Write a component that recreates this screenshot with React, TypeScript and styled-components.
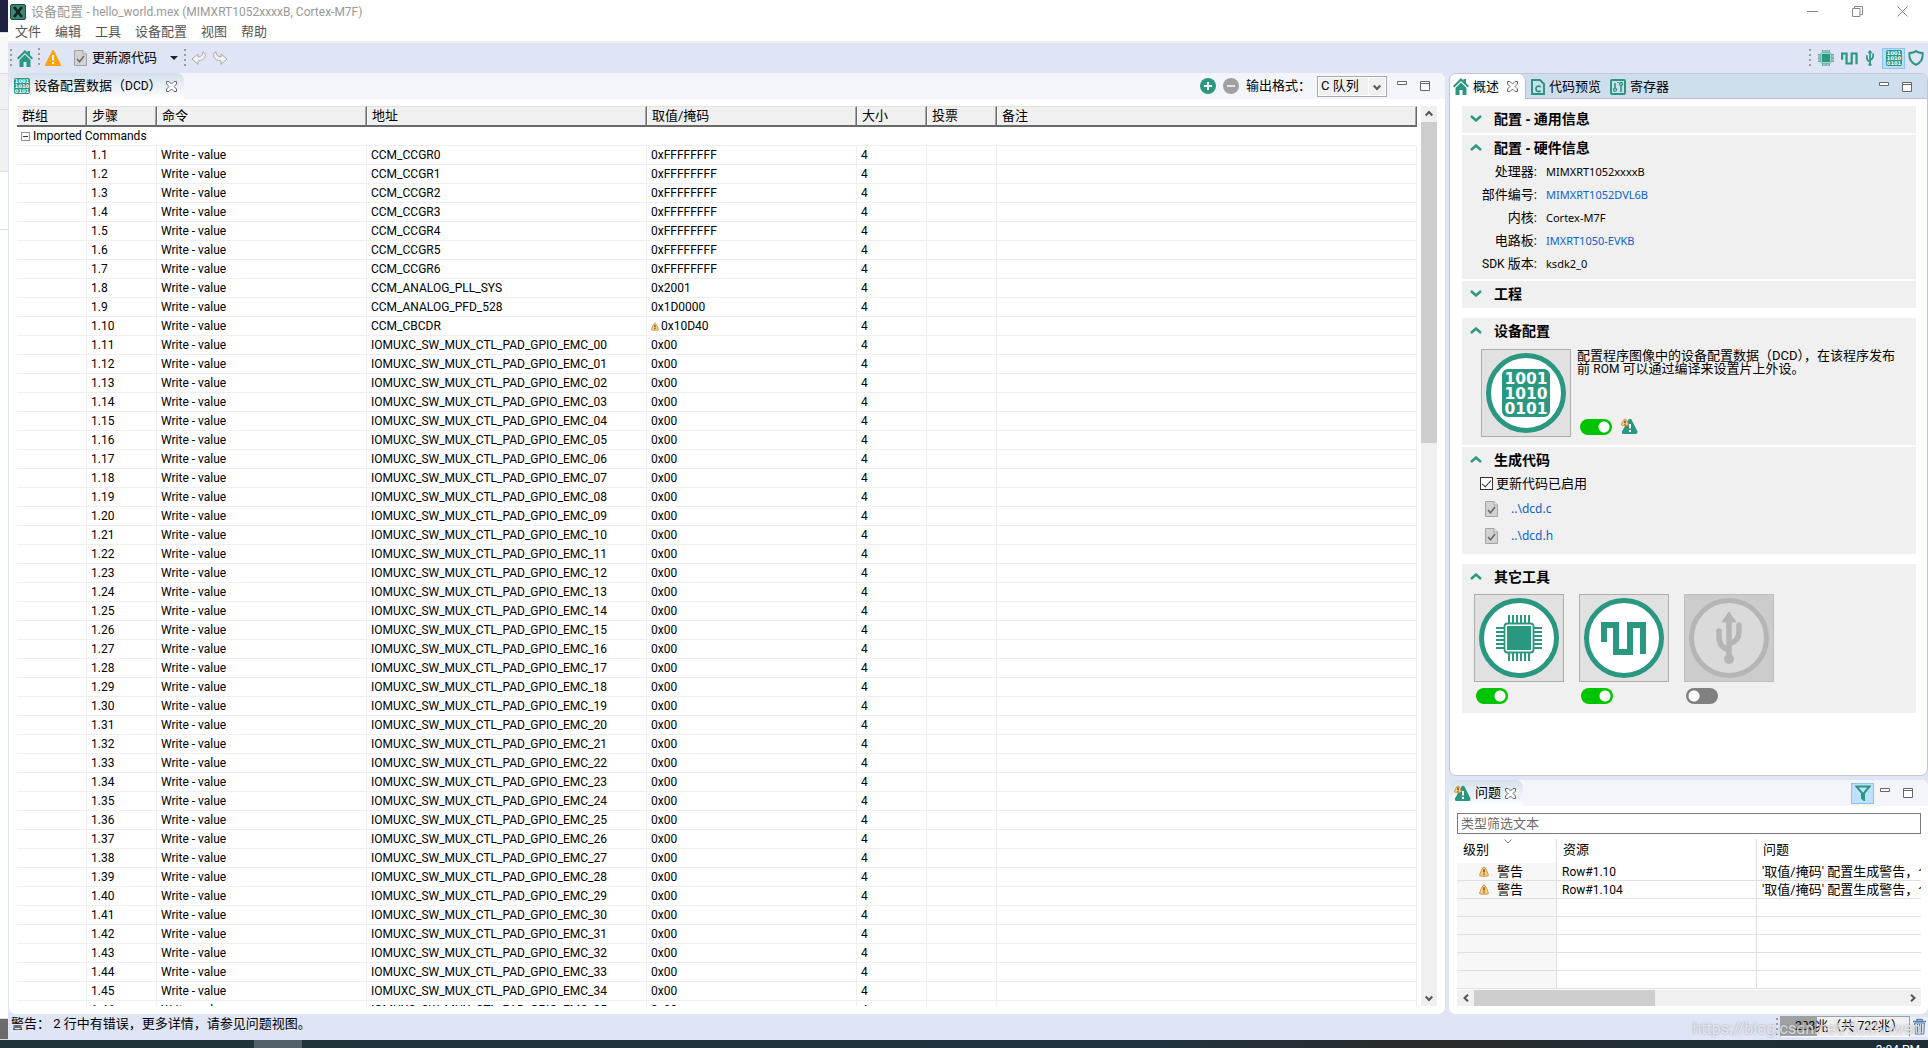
import React, { useState } from 'react';
import styled, { createGlobalStyle, css } from 'styled-components';

const GREEN = '#2a9780';
const FRAME = '#dfe5f5';
const CJK = '"Noto Sans CJK SC", sans-serif';

const Global = createGlobalStyle`
  * { box-sizing: border-box; }
  body { margin: 0; background: #fff; color: #000; font: 13px/16px Roboto, ${CJK}; overflow: hidden; }
  button, input, select { font: inherit; color: inherit; }
  button { border: 0; padding: 0; margin: 0; background: none; display: flex; align-items: center; }
  a { color: #0b62d0; text-decoration: none; }
  svg { display: block; flex: none; }
`;

/* ---------- frame ---------- */
const Desktop = styled.div`
  height: 100vh;
  display: flex;
  flex-direction: column;
  position: relative;
`;
const DesktopRow = styled.div`
  flex: 1;
  min-height: 0;
  display: flex;
`;
const BehindStrip = styled.div`
  width: 8px;
  flex: none;
  display: flex;
  flex-direction: column;
`;
const StripBlock = styled.div<{ $h?: number; $color: string }>`
  ${p => (p.$h ? css`height: ${p.$h}px;` : css`flex: 1;`)}
  background: ${p => p.$color};
  border-bottom: 1px solid #dcdcdc;
`;
const Window = styled.div`
  flex: 1;
  min-width: 0;
  display: flex;
  flex-direction: column;
  background: ${FRAME};
`;
const TitleBar = styled.header`
  height: 23px;
  background: #fff;
  display: flex;
  align-items: center;
  padding: 0 20px 0 2px;
  gap: 5px;
  color: #999;
`;
const TitleText = styled.h1`
  flex: 1;
  margin: 0;
  font-size: 13px;
  font-weight: 400;
`;
const Latin = styled.span`
  font-size: 12px;
`;
const WindowButtons = styled.div`
  display: flex;
  gap: 34px;
  color: #888;
`;
const MenuBar = styled.nav`
  height: 20px;
  background: #fff;
  border-bottom: 2px solid #f0f0f0;
  display: flex;
  align-items: center;
  gap: 14px;
  padding-left: 7px;
  color: #555;
`;
const ToolBar = styled.div`
  height: 30px;
  display: flex;
  align-items: center;
  justify-content: space-between;
  padding: 0 4px 0 2px;
`;
const Tools = styled.div<{ $gap: number }>`
  display: flex;
  align-items: center;
  gap: ${p => p.$gap}px;
`;
const Grip = styled.span<{ $h?: number }>`
  width: 2px;
  height: ${p => p.$h || 18}px;
  background: repeating-linear-gradient(#a09c94 0 2px, transparent 2px 5px);
`;
const UpdateButton = styled.button`
  gap: 5px;
  margin-left: 8px;
`;
const Caret = styled.i`
  border: 4px solid transparent;
  border-top-color: #222;
  border-bottom: 0;
  margin: 0 1px 0 8px;
`;
const PickedButton = styled.button`
  width: 23px;
  height: 21px;
  justify-content: center;
  background: #b9dcfa;
  border: 1px solid #8ac4f7;
  margin-right: -4px;
`;
const Workspace = styled.main`
  flex: 1;
  min-height: 0;
  display: grid;
  grid-template-columns: minmax(0, 1fr) 479px;
  gap: 4px;
  padding-left: 1px;
`;
const SideColumn = styled.div`
  min-height: 0;
  display: grid;
  grid-template-rows: minmax(0, 1fr) 234px;
  gap: 4px;
`;
const Panel = styled.section<{ $outlined?: boolean }>`
  min-height: 0;
  min-width: 0;
  background: #fff;
  border-radius: 7px;
  overflow: hidden;
  display: flex;
  flex-direction: column;
  ${p => p.$outlined && css`border: 1px solid #c3c7d2;`}
`;
const TabBar = styled.div<{ $active?: boolean }>`
  height: 26px;
  flex: none;
  display: flex;
  align-items: stretch;
  justify-content: space-between;
  background: ${p => (p.$active ? '#cfdeed' : '#f4f5fb')};
  ${p => p.$active && css`box-shadow: inset 0 -1px #b4bfd3; height: 25px;`}
  padding-right: 15px;
`;
const TabGroup = styled.div`
  display: flex;
`;
const Tab = styled.button<{ $look: 'soft' | 'open' | 'flat' }>`
  gap: 4px;
  padding: 0 7px 0 5px;
  ${p => p.$look === 'soft' && css`
    background: linear-gradient(#d3e0ec, #fff);
    border-radius: 0 7px 0 0;
  `}
  ${p => p.$look === 'open' && css`
    background: #fff;
    border-right: 1px solid #b4bfd3;
    border-radius: 0 7px 0 0;
    padding-left: 3px;
  `}
  ${p => p.$look === 'flat' && css`
    padding-right: 4px;
  `}
`;
const CloseSlot = styled.span<{ $tight?: boolean }>`
  margin-left: ${p => (p.$tight ? 0 : 4)}px;
`;

/* ---------- command table ---------- */
const FormatLabel = styled.label`
  display: flex;
  align-items: center;
  gap: 6px;
  margin-right: 3px;
`;
const SelectBox = styled.span`
  position: relative;
  display: flex;
`;
const FormatSelect = styled.select`
  appearance: none;
  width: 70px;
  height: 21px;
  border: 1px solid #a8a8a8;
  border-radius: 0;
  background: linear-gradient(90deg, #f0f0f0 50px, #fff 50px 51px, #f0f0f0 51px);
  box-shadow: inset 0 0 0 1px #fff;
  padding: 0 0 1px 3px;
  line-height: 16px;
`;
const SelectArrow = styled.span`
  position: absolute;
  right: 6px;
  top: 8px;
  pointer-events: none;
`;
const TableArea = styled.div`
  flex: 1;
  min-height: 0;
  display: flex;
  margin: 7px 8px 8px;
  gap: 4px;
`;
const TableClip = styled.div`
  flex: 1;
  min-width: 0;
  overflow: hidden;
`;
const CommandTable = styled.table`
  width: 100%;
  table-layout: fixed;
  border-collapse: separate;
  border-spacing: 0;
  font-size: 12px;
  th {
    height: 21px;
    padding: 0 0 0 5px;
    text-align: left;
    font-size: 13px;
    line-height: 16px;
    font-weight: 400;
    background: #f0f0f0;
    border-top: 1px solid #e2e2e2;
    border-right: 1px solid #696969;
    border-bottom: 2px solid #696969;
    box-shadow: inset -1px 0 #a8a8a8, inset 1px 0 #fff;
  }
  td {
    height: 19px;
    padding: 0 0 0 4px;
    border-right: 1px solid #efefef;
    border-bottom: 1px solid #efefef;
    white-space: nowrap;
    line-height: 16px;
  }
`;
const GroupCell = styled.td`
  border-right-color: transparent !important;
`;
const GroupLabel = styled.div`
  display: flex;
  align-items: center;
  gap: 3px;
`;
const Expander = styled.button`
  width: 9px;
  height: 9px;
  border: 1px solid #919191;
  background: linear-gradient(#333, #333) center / 5px 1px no-repeat #fff;
`;
const ValueCell = styled.div`
  display: flex;
  align-items: center;
  gap: 2px;
`;
const ScrollTrack = styled.div<{ $row?: boolean }>`
  flex: none;
  display: flex;
  flex-direction: ${p => (p.$row ? 'row' : 'column')};
  ${p => (p.$row ? css`height: 16px;` : css`width: 16px;`)}
  background: #f0f0f0;
`;
const ScrollEnd = styled.button`
  width: 17px;
  height: 16px;
  flex: none;
  justify-content: center;
  align-self: center;
`;
const ScrollLane = styled.div`
  flex: 1;
  min-height: 0;
`;
const ScrollThumb = styled.div<{ $row?: boolean }>`
  background: #cdcdcd;
  ${p => (p.$row ? css`width: 42%; height: 100%;` : css`height: 37%; width: 100%;`)}
`;

/* ---------- overview ---------- */
const Overview = styled.div`
  flex: 1;
  min-height: 0;
  padding: 7px 11px 0 12px;
`;
const Section = styled.section<{ $gap?: number }>`
  background: #f0f0f0;
  min-height: 27px;
  margin-bottom: ${p => p.$gap || 2}px;
`;
const SectionTitle = styled.h2`
  margin: 0;
  height: 25px;
  display: flex;
  align-items: center;
  gap: 12px;
  padding-left: 8px;
  font: 700 14px/20px "Noto Sans", ${CJK};
`;
const Facts = styled.dl`
  margin: 0;
  padding-bottom: 4px;
  display: grid;
  grid-template-columns: 75px 1fr;
  grid-auto-rows: 23px;
  align-items: center;
  column-gap: 9px;
  dt { text-align: right; }
  dt, dd { margin: 0; }
  dd { font: 11px/16px "Noto Sans", ${CJK}; }
`;
const DeviceRow = styled.div`
  display: flex;
  gap: 6px;
  padding: 6px 12px 8px 19px;
`;
const DeviceText = styled.div`
  flex: 1;
  display: flex;
  flex-direction: column;
  justify-content: space-between;
  p { margin: 0; line-height: 13px; }
`;
const Tile = styled.button<{ $off?: boolean }>`
  width: 90px;
  height: 88px;
  justify-content: center;
  border: 1px solid ${p => (p.$off ? '#bfbfbf' : '#adadad')};
  background: ${p => (p.$off ? '#cccccc' : '#e1e1e1')};
`;
const ToggleRow = styled.div`
  display: flex;
  align-items: center;
  gap: 9px;
  padding: 0 3px 2px;
`;
const Toggle = styled.input`
  appearance: none;
  width: 32px;
  height: 16px;
  margin: 0;
  border-radius: 8px;
  background: radial-gradient(circle at 8px 8px, #fff 5px, transparent 6px) #808080;
  &:checked {
    background: radial-gradient(circle at 24px 8px, #fff 5px, transparent 6px) #00c400;
  }
`;
const CheckLabel = styled.label`
  height: 23px;
  display: flex;
  align-items: center;
  gap: 3px;
  padding-left: 18px;
`;
const Check = styled.input`
  appearance: none;
  width: 13px;
  height: 13px;
  margin: 0;
  border: 1px solid #333;
  background: #fff;
  display: grid;
  place-items: center;
  &:checked::after {
    content: "";
    width: 8px;
    height: 4px;
    border: solid #333;
    border-width: 0 0 1px 1px;
    transform: translateY(-1px) rotate(-48deg);
  }
`;
const FileList = styled.ul`
  list-style: none;
  margin: 0;
  padding: 0 0 5px 23px;
  font: 12px/16px "Noto Sans", ${CJK};
  li { height: 27px; display: flex; align-items: center; gap: 13px; }
`;
const ToolTiles = styled.div`
  display: flex;
  gap: 15px;
  padding: 5px 12px 9px;
`;
const ToolTile = styled.div`
  display: flex;
  flex-direction: column;
  gap: 6px;
  input { margin-left: 2px; }
`;

/* ---------- problems ---------- */
const ProblemsBody = styled.div`
  flex: 1;
  min-height: 0;
  display: flex;
  flex-direction: column;
  padding: 7px 7px 8px 8px;
`;
const FilterInput = styled.input`
  height: 21px;
  flex: none;
  border: 1px solid #7a7a7a;
  padding: 0 3px 1px;
  margin-bottom: 5px;
  &::placeholder { color: #6b6b6b; opacity: 1; }
`;
const FilterButton = styled(PickedButton)`
  background: #bfe0fb;
`;
const ProblemClip = styled.div`
  flex: 1;
  min-height: 0;
  overflow: hidden;
  margin-bottom: 1px;
`;
const ProblemTable = styled.table`
  width: 100%;
  table-layout: fixed;
  border-collapse: separate;
  border-spacing: 0;
  th {
    height: 24px;
    padding: 0 0 2px 6px;
    text-align: left;
    font-weight: 400;
    border-right: 1px solid #e0e0e0;
    line-height: 16px;
    position: relative;
  }
  td {
    height: 18px;
    padding: 0 0 0 5px;
    border-right: 1px solid #e0e0e0;
    border-bottom: 1px solid #e0e0e0;
    white-space: nowrap;
    overflow: hidden;
    line-height: 16px;
  }
  td:first-child { background: #f7f7f7; }
  td:nth-child(2) { font: 12px/16px Roboto, ${CJK}; }
  th:last-child, td:last-child { border-right: 0; }
`;
const SortMark = styled.span`
  position: absolute;
  top: 0;
  left: 47px;
`;
const Level = styled.div`
  display: flex;
  align-items: center;
  gap: 8px;
  padding-left: 17px;
`;

/* ---------- bottom ---------- */
const StatusBar = styled.footer`
  height: 26px;
  flex: none;
  display: flex;
  justify-content: space-between;
  padding: 2px 0 0 3px;
`;
const StatusText = styled.span`
  line-height: 16px;
`;
const Memory = styled.div`
  display: flex;
  align-items: center;
  height: 21px;
  gap: 2px;
`;
const MemoryMeter = styled.div`
  width: 130px;
  height: 21px;
  border: 1px solid #a0a0a0;
  border-bottom-color: #fff;
  background: linear-gradient(90deg, #a0a0a0 28%, #f0f0f0 28%);
  line-height: 17px;
  padding-left: 14px;
  white-space: nowrap;
  overflow: hidden;
`;
const Trash = styled.button`
  width: 18px;
  height: 20px;
  justify-content: center;
  background: #eef0f5;
  margin-left: -2px;
`;
const Watermark = styled.span`
  position: absolute;
  right: 7px;
  bottom: 9px;
  font: 16px/20px Roboto, ${CJK};
  color: rgba(255, 255, 255, 0.7);
  text-shadow: 0 0 2px rgba(90, 90, 105, 0.6);
  pointer-events: none;
`;
const TaskBar = styled.div`
  height: 8px;
  flex: none;
  display: flex;
  justify-content: space-between;
  overflow: hidden;
  background: linear-gradient(90deg, #20333a, #22333f 60%, #2a2a2a 75%, #1f2d35 85%, #1e2c34);
  padding: 0 8px 0 254px;
`;
const TaskSlot = styled.div`
  width: 48px;
  background: #52616a;
`;
const Clock = styled.time`
  color: #fff;
  font: 12px/16px Roboto, ${CJK};
  padding-top: 2px;
`;

/* ---------- icons ---------- */
const Home = () => (
  <svg width="16" height="17" viewBox="0 0 16 17" fill={GREEN}>
    <path d="M8 0L0 8l1.3 1.4L8 3l6.700 6.400L16 8l-3-3V1h-2.500v1.600z" />
    <path d="M8 4.500L2.500 10v7H6.500v-5h3v5h4v-7z" />
  </svg>
);
const Warn = () => (
  <svg width="16" height="16" viewBox="0 0 16 16">
    <path d="M8 1L15 15H1z" fill="#fca311" stroke="#fca311" strokeWidth="2" strokeLinejoin="round" />
    <path d="M7 5h2v5.500H7zM7 12h2v2H7z" fill="#fff" />
  </svg>
);
const SmallWarn = ({ s = 10 }: { s?: number }) => (
  <svg width={s} height={s + 1} viewBox="0 0 10 11">
    <path d="M5 .7C6 .7 9.500 8 9.400 9.500 9.200 10.500 .8 10.500 .6 9.500 .5 8 4 .7 5 .7z" fill="#f6cf7d" stroke="#c98a34" strokeWidth=".9" />
    <path d="M4.400 3.200h1.200v3.400H4.400zM4.400 7.500h1.200v1.300H4.400z" fill="#4a3210" />
  </svg>
);
const AlertPair = () => (
  <svg width="17" height="17" viewBox="0 0 17 17">
    <path d="M7.500 1.500Q9 0 10.500 1.500L16.500 13.500Q16.500 16 15 16H2.500Q.5 16 1 13.500z" fill={GREEN} />
    <path d="M8 6h2v4.500H8zM8 12h2v2H8z" fill="#fff" />
    <path d="M4 .8C5 .8 7.500 5.500 7.400 6.800 7.200 7.900 .7 7.900 .5 6.800 .4 5.500 3 .8 4 .8z" fill="#f6cf7d" stroke="#c98a34" strokeWidth=".9" />
    <path d="M3.400 2.500h1.200v2.600H3.400zM3.400 5.800h1.200v1H3.400z" fill="#4a3210" />
  </svg>
);
const Doc = () => (
  <svg width="13" height="16" viewBox="0 0 13 16">
    <path d="M.5.5h8.500l3.500 3.500v11.500H.5z" fill="#d2d2d2" stroke="#a3a3a3" />
    <path d="M9 .5v3.500h3.500" fill="#eee" stroke="#a3a3a3" />
    <path d="M3 9l2.500 2.800L10 6" fill="none" stroke="#666" strokeWidth="1.500" />
  </svg>
);
const Back = ({ flip }: { flip?: boolean }) => (
  <svg width="16" height="14" viewBox="0 0 16 14">
    <path
      transform={flip ? 'matrix(-1 0 0 1 16 0)' : undefined}
      d="M1 8l6-5v3c3 0 5-2 5-5.200C15.500 2 16 9 7 10v3.300z"
      fill="#f3f3f3" stroke="#a9a9a9" strokeLinejoin="round"
    />
  </svg>
);
const Binary = ({ s = 16 }: { s?: number }) => (
  <svg width={s} height={s} viewBox="0 0 48 48">
    <rect width="48" height="48" rx="6" fill={GREEN} />
    <g fill="#fff" fontFamily="DejaVu Sans" fontWeight="700" fontSize="15.500" textAnchor="middle">
      <text x="24" y="15">1001</text>
      <text x="24" y="30">1010</text>
      <text x="24" y="45">0101</text>
    </g>
  </svg>
);
const Chip = ({ s = 16 }: { s?: number }) => {
  const pins = [13, 17, 21, 25, 29, 33];
  return (
    <svg width={s} height={s} viewBox="0 0 46 46">
      <g stroke={GREEN} strokeWidth="2">
        {pins.map(p => (
          <path key={p} d={`M${p} 0v8M${p} 38v8M0 ${p}h8M38 ${p}h8`} />
        ))}
      </g>
      <rect x="8.500" y="8.500" width="29" height="29" rx="3" fill="#fff" stroke={GREEN} strokeWidth="1.800" />
      <rect x="11" y="11" width="24" height="24" fill={GREEN} />
    </svg>
  );
};
const Wave = ({ w = 17, h = 13 }: { w?: number; h?: number }) => (
  <svg width={w} height={h} viewBox="0 0 46 33">
    <path d="M3 20V3h12v27h14V3h13v29" fill="none" stroke={GREEN} strokeWidth="6" />
  </svg>
);
const Usb = ({ w = 10, h = 16, c = GREEN }: { w?: number; h?: number; c?: string }) => (
  <svg width={w} height={h} viewBox="0 0 26 52">
    <path d="M13 0L20 10H6z" fill={c} stroke={c} strokeLinejoin="round" />
    <path d="M13 8v38M3 19v6q0 10 10 13M23 13v7q0 9-10 12" fill="none" stroke={c} strokeWidth="5.500" strokeLinecap="round" />
    <circle cx="13" cy="47" r="5" fill={c} />
  </svg>
);
const Shield = () => (
  <svg width="16" height="16" viewBox="0 0 16 16">
    <path d="M8 1.200q3 2 6.500 1.800Q15.500 11.500 8 14.800.500 11.500 1.500 3 5 3.200 8 1.200z" fill="none" stroke={GREEN} strokeWidth="2" />
  </svg>
);
const Ring = styled.span<{ $off?: boolean }>`
  width: 80px;
  height: 80px;
  border-radius: 50%;
  display: flex;
  align-items: center;
  justify-content: center;
  border: 5px solid ${p => (p.$off ? '#b5b5b5' : GREEN)};
  background: ${p => (p.$off ? '#dadada' : '#fff')};
`;
const CodeFile = () => (
  <svg width="14" height="16" viewBox="0 0 14 16">
    <path d="M1 1h8l4 4v10H1z" fill="none" stroke={GREEN} strokeWidth="2" />
    <path d="M9.800 7.600Q5 6.200 5 9.800T9.800 12.200" fill="none" stroke={GREEN} strokeWidth="1.800" />
  </svg>
);
const Registers = () => (
  <svg width="16" height="16" viewBox="0 0 16 16" fill="none" stroke={GREEN}>
    <rect x="1" y="1" width="14" height="14" rx="1" strokeWidth="2" />
    <path d="M5 4v5M11 7v6M8 3v1" strokeWidth="1.600" />
    <circle cx="5" cy="10.800" r="1.500" strokeWidth="1.300" />
    <circle cx="11" cy="5" r="1.500" strokeWidth="1.300" />
  </svg>
);
const Cross = () => (
  <svg width="11" height="11" viewBox="0 0 11 11">
    <path d="M.5.5h2.500l2.500 2.500L8 .5h2.500V3L8 5.500 10.500 8v2.500H8L5.500 8 3 10.500H.5V8L3 5.500.5 3z" fill="#fff" stroke="#666" />
  </svg>
);
const MinMax = () => (
  <Tools $gap={13}>
    <svg width="10" height="10" viewBox="0 0 10 10"><path d="M.5 .5h9v3h-9z" fill="#fff" stroke="#666" /></svg>
    <svg width="10" height="10" viewBox="0 0 10 10"><path d="M.5.5h9v9h-9zM.5 2.500h9" fill="#fff" stroke="#666" /></svg>
  </Tools>
);
const Chevron = ({ dir }: { dir: 'up' | 'down' }) => (
  <svg width="12" height="7" viewBox="0 0 12 7">
    <path d={dir === 'up' ? 'M1 6l5-4.500L11 6' : 'M1 1l5 4.500L11 1'} fill="none" stroke={GREEN} strokeWidth="2.400" />
  </svg>
);
const Arrow = ({ d }: { d: string }) => (
  <svg width="8" height="8" viewBox="0 0 8 8"><path d={d} fill="none" stroke="#555" strokeWidth="2" /></svg>
);

/* ---------- data ---------- */
const commandAt = (step: number) => {
  if (step <= 7) return [`CCM_CCGR${step - 1}`, '0xFFFFFFFF'];
  if (step === 8) return ['CCM_ANALOG_PLL_SYS', '0x2001'];
  if (step === 9) return ['CCM_ANALOG_PFD_528', '0x1D0000'];
  if (step === 10) return ['CCM_CBCDR', '0x10D40'];
  return [`IOMUXC_SW_MUX_CTL_PAD_GPIO_EMC_${String(step - 11).padStart(2, '0')}`, '0x00'];
};
const commands = Array.from({ length: 46 }, (_, i) => {
  const [address, value] = commandAt(i + 1);
  return { step: `1.${i + 1}`, address, value, warn: i === 9 };
});
const problems = ['Row#1.10', 'Row#1.104'];

const CommandPanel = () => (
  <Panel>
    <TabBar>
      <TabGroup>
        <Tab $look="soft">
          <Binary /><span>设备配置数据（<Latin>DCD</Latin>）</span>
          <CloseSlot $tight><Cross /></CloseSlot>
        </Tab>
      </TabGroup>
      <Tools $gap={7}>
        <button aria-label="添加">
          <svg width="16" height="16" viewBox="0 0 16 16"><circle cx="8" cy="8" r="8" fill={GREEN} /><path d="M8 4v8M4 8h8" stroke="#fff" strokeWidth="2" /></svg>
        </button>
        <button aria-label="删除">
          <svg width="16" height="16" viewBox="0 0 16 16"><circle cx="8" cy="8" r="8" fill="#a0a0a0" /><path d="M4 8h8" stroke="#e4e4e4" strokeWidth="2" /></svg>
        </button>
        <FormatLabel>
          输出格式：
          <SelectBox>
            <FormatSelect><option>C 队列</option></FormatSelect>
            <SelectArrow><Arrow d="M.7 1.500L4 5l3.300-3.500" /></SelectArrow>
          </SelectBox>
        </FormatLabel>
        <MinMax />
      </Tools>
    </TabBar>
    <TableArea>
      <TableClip>
        <CommandTable>
          <colgroup>
            <col width="70" /><col width="70" /><col width="210" /><col width="280" />
            <col width="210" /><col width="70" /><col width="70" /><col />
          </colgroup>
          <thead>
            <tr>{['群组', '步骤', '命令', '地址', '取值/掩码', '大小', '投票', '备注'].map(h => <th key={h}>{h}</th>)}</tr>
          </thead>
          <tbody>
            <tr>
              <GroupCell colSpan={8}>
                <GroupLabel><Expander aria-label="折叠" />Imported Commands</GroupLabel>
              </GroupCell>
            </tr>
            {commands.map(c => (
              <tr key={c.step}>
                <td />
                <td>{c.step}</td>
                <td>Write - value</td>
                <td>{c.address}</td>
                <td><ValueCell>{c.warn && <SmallWarn s={8} />}{c.value}</ValueCell></td>
                <td>4</td>
                <td />
                <td />
              </tr>
            ))}
          </tbody>
        </CommandTable>
      </TableClip>
      <ScrollTrack>
        <ScrollEnd aria-label="向上"><Arrow d="M.7 5.500L4 2l3.300 3.500" /></ScrollEnd>
        <ScrollLane><ScrollThumb /></ScrollLane>
        <ScrollEnd aria-label="向下"><Arrow d="M.7 2.500L4 6l3.300-3.500" /></ScrollEnd>
      </ScrollTrack>
    </TableArea>
  </Panel>
);

const OverviewPanel = () => {
  const [on, setOn] = useState([true, true, true, false]);
  const flip = (i: number) => setOn(on.map((v, j) => (i === j ? !v : v)));
  return (
    <Panel $outlined>
      <TabBar $active>
        <TabGroup>
          <Tab $look="open"><Home /> 概述 <CloseSlot><Cross /></CloseSlot></Tab>
          <Tab $look="flat"><CodeFile /> 代码预览</Tab>
          <Tab $look="flat"><Registers /> 寄存器</Tab>
        </TabGroup>
        <MinMax />
      </TabBar>
      <Overview>
        <Section><SectionTitle><Chevron dir="down" />配置 - 通用信息</SectionTitle></Section>
        <Section>
          <SectionTitle><Chevron dir="up" />配置 - 硬件信息</SectionTitle>
          <Facts>
            <dt>处理器:</dt><dd>MIMXRT1052xxxxB</dd>
            <dt>部件编号:</dt><dd><a href="#part">MIMXRT1052DVL6B</a></dd>
            <dt>内核:</dt><dd>Cortex-M7F</dd>
            <dt>电路板:</dt><dd><a href="#board">IMXRT1050-EVKB</a></dd>
            <dt><Latin>SDK</Latin> 版本:</dt><dd>ksdk2_0</dd>
          </Facts>
        </Section>
        <Section $gap={10}><SectionTitle><Chevron dir="down" />工程</SectionTitle></Section>
        <Section>
          <SectionTitle><Chevron dir="up" />设备配置</SectionTitle>
          <DeviceRow>
            <Tile aria-label="设备配置"><Ring><Binary s={48} /></Ring></Tile>
            <DeviceText>
              <p>配置程序图像中的设备配置数据（DCD），在该程序发布前 <Latin>ROM</Latin> 可以通过编译来设置片上外设。</p>
              <ToggleRow>
                <Toggle type="checkbox" aria-label="启用设备配置" checked={on[0]} onChange={() => flip(0)} />
                <AlertPair />
              </ToggleRow>
            </DeviceText>
          </DeviceRow>
        </Section>
        <Section $gap={10}>
          <SectionTitle><Chevron dir="up" />生成代码</SectionTitle>
          <CheckLabel><Check type="checkbox" defaultChecked />更新代码已启用</CheckLabel>
          <FileList>
            <li><Doc /><a href="#dcd-c">..\dcd.c</a></li>
            <li><Doc /><a href="#dcd-h">..\dcd.h</a></li>
          </FileList>
        </Section>
        <Section>
          <SectionTitle><Chevron dir="up" />其它工具</SectionTitle>
          <ToolTiles>
            <ToolTile>
              <Tile aria-label="引脚"><Ring><Chip s={46} /></Ring></Tile>
              <Toggle type="checkbox" aria-label="启用引脚" checked={on[1]} onChange={() => flip(1)} />
            </ToolTile>
            <ToolTile>
              <Tile aria-label="时钟"><Ring><Wave w={46} h={33} /></Ring></Tile>
              <Toggle type="checkbox" aria-label="启用时钟" checked={on[2]} onChange={() => flip(2)} />
            </ToolTile>
            <ToolTile>
              <Tile $off aria-label="外设"><Ring $off><Usb w={26} h={52} c="#b5b5b5" /></Ring></Tile>
              <Toggle type="checkbox" aria-label="启用外设" checked={on[3]} onChange={() => flip(3)} />
            </ToolTile>
          </ToolTiles>
        </Section>
      </Overview>
    </Panel>
  );
};

const ProblemsPanel = () => (
  <Panel>
    <TabBar>
      <TabGroup>
        <Tab $look="soft"><AlertPair /> 问题 <CloseSlot $tight><Cross /></CloseSlot></Tab>
      </TabGroup>
      <Tools $gap={10}>
        <FilterButton aria-label="筛选">
          <svg width="16" height="16" viewBox="0 0 16 16"><path d="M1.500 1.500h13L9 8v7L7 13V8z" fill="none" stroke={GREEN} strokeWidth="2" /></svg>
        </FilterButton>
        <MinMax />
      </Tools>
    </TabBar>
    <ProblemsBody>
      <FilterInput aria-label="筛选" placeholder="类型筛选文本" />
      <ProblemClip>
        <ProblemTable>
          <colgroup><col width="100" /><col width="200" /><col /></colgroup>
          <thead>
            <tr>
              <th>级别<SortMark><svg width="8" height="5" viewBox="0 0 8 5"><path d="M.5.5L4 4 7.500.5" fill="none" stroke="#888" /></svg></SortMark></th>
              <th>资源</th>
              <th>问题</th>
            </tr>
          </thead>
          <tbody>
            {problems.map(p => (
              <tr key={p}>
                <td><Level><SmallWarn />警告</Level></td>
                <td>{p}</td>
                <td>'取值/掩码' 配置生成警告，个别位</td>
              </tr>
            ))}
            {[1, 2, 3, 4, 5].map(n => <tr key={n}><td /><td /><td /></tr>)}
          </tbody>
        </ProblemTable>
      </ProblemClip>
      <ScrollTrack $row>
        <ScrollEnd aria-label="向左"><Arrow d="M6 .7L2.500 4 6 7.300" /></ScrollEnd>
        <ScrollLane><ScrollThumb $row /></ScrollLane>
        <ScrollEnd aria-label="向右"><Arrow d="M2 .7L5.500 4 2 7.300" /></ScrollEnd>
      </ScrollTrack>
    </ProblemsBody>
  </Panel>
);

export default function App() {
  return (
    <Desktop>
      <Global />
      <DesktopRow>
        <BehindStrip>
          <StripBlock $h={33} $color="#1e2140" />
          <StripBlock $h={41} $color="#f8f8f8" />
          <StripBlock $h={36} $color="#f1f1f1" />
          <StripBlock $h={62} $color="#f1f1f1" />
          <StripBlock $h={58} $color="#fff" />
          <StripBlock $color="#fff" />
          <StripBlock $h={21} $color="#6b6b6b" />
        </BehindStrip>
        <Window>
          <TitleBar>
            <svg width="16" height="16" viewBox="0 0 16 16">
              <rect x=".5" y=".5" width="15" height="15" rx="1.500" fill="#3f8576" stroke="#1d4a42" />
              <path d="M4 3l8 10M12 3L4 13" stroke="#10261f" strokeWidth="2.600" />
            </svg>
            <TitleText>设备配置 <Latin>- hello_world.mex (MIMXRT1052xxxxB, Cortex-M7F)</Latin></TitleText>
            <WindowButtons>
              <button aria-label="最小化"><svg width="11" height="11" viewBox="0 0 11 11"><path d="M0 5.500h11" stroke="currentColor" /></svg></button>
              <button aria-label="还原"><svg width="11" height="11" viewBox="0 0 11 11"><path d="M.5 2.500h7.500v8H.5zM2.500 2.500v-2h8v8H8" fill="none" stroke="currentColor" /></svg></button>
              <button aria-label="关闭"><svg width="11" height="11" viewBox="0 0 11 11"><path d="M.5.5l10 10M10.500.5l-10 10" stroke="currentColor" /></svg></button>
            </WindowButtons>
          </TitleBar>
          <MenuBar>
            {['文件', '编辑', '工具', '设备配置', '视图', '帮助'].map(m => <button key={m}>{m}</button>)}
          </MenuBar>
          <ToolBar>
            <Tools $gap={5}>
              <Grip />
              <button aria-label="主页"><Home /></button>
              <Grip $h={20} />
              <button aria-label="警告"><Warn /></button>
              <UpdateButton><Doc />更新源代码<Caret /></UpdateButton>
              <Grip />
              <button aria-label="撤销"><Back /></button>
              <button aria-label="重做"><Back flip /></button>
            </Tools>
            <Tools $gap={7}>
              <Grip />
              <button aria-label="引脚"><Chip /></button>
              <button aria-label="时钟"><Wave /></button>
              <button aria-label="USB"><Usb /></button>
              <PickedButton aria-label="DCD"><Binary /></PickedButton>
              <button aria-label="安全"><Shield /></button>
            </Tools>
          </ToolBar>
          <Workspace>
            <CommandPanel />
            <SideColumn>
              <OverviewPanel />
              <ProblemsPanel />
            </SideColumn>
          </Workspace>
          <StatusBar>
            <StatusText>警告： 2 行中有错误，更多详情，请参见问题视图。</StatusText>
            <Memory>
              <Grip />
              <MemoryMeter><Latin>203</Latin>兆（共 <Latin>722</Latin>兆）</MemoryMeter>
              <Trash aria-label="回收内存">
                <svg width="13" height="17" viewBox="0 0 13 17" fill="none" stroke="#5b7fae">
                  <path d="M0 3.500h13M4 3V1.500h5V3" strokeWidth="1.500" />
                  <path d="M1.500 5l.7 11h8.600l.7-11z" fill="#d4e0f0" />
                  <path d="M4.500 6v8.500M6.500 6v8.500M8.500 6v8.500" />
                </svg>
              </Trash>
            </Memory>
          </StatusBar>
        </Window>
      </DesktopRow>
      <TaskBar><TaskSlot /><Clock>3:04 PM</Clock></TaskBar>
      <Watermark>https://blog.csdn.net/Sushuwen</Watermark>
    </Desktop>
  );
}
